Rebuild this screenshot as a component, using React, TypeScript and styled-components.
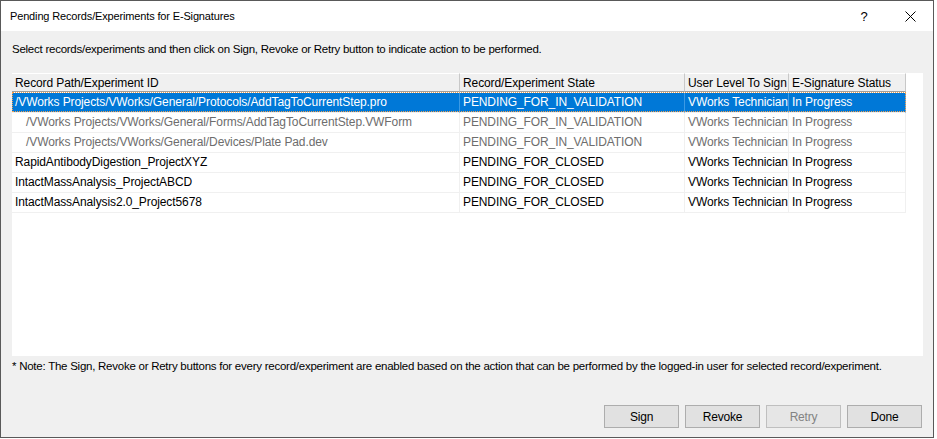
import React from "react";
import styled, { createGlobalStyle } from "styled-components";

type Row = {
    path: string;
    state: string;
    level: string;
    status: string;
    child?: boolean;
    selected?: boolean;
};

const rows: Row[] = [
    {
        path: "/VWorks Projects/VWorks/General/Protocols/AddTagToCurrentStep.pro",
        state: "PENDING_FOR_IN_VALIDATION",
        level: "VWorks Technician",
        status: "In Progress",
        selected: true,
    },
    {
        path: "/VWorks Projects/VWorks/General/Forms/AddTagToCurrentStep.VWForm",
        state: "PENDING_FOR_IN_VALIDATION",
        level: "VWorks Technician",
        status: "In Progress",
        child: true,
    },
    {
        path: "/VWorks Projects/VWorks/General/Devices/Plate Pad.dev",
        state: "PENDING_FOR_IN_VALIDATION",
        level: "VWorks Technician",
        status: "In Progress",
        child: true,
    },
    {
        path: "RapidAntibodyDigestion_ProjectXYZ",
        state: "PENDING_FOR_CLOSED",
        level: "VWorks Technician",
        status: "In Progress",
    },
    {
        path: "IntactMassAnalysis_ProjectABCD",
        state: "PENDING_FOR_CLOSED",
        level: "VWorks Technician",
        status: "In Progress",
    },
    {
        path: "IntactMassAnalysis2.0_Project5678",
        state: "PENDING_FOR_CLOSED",
        level: "VWorks Technician",
        status: "In Progress",
    },
];

const columns = ["Record Path/Experiment ID", "Record/Experiment State", "User Level To Sign", "E-Signature Status"];

const App: React.FC = () => {
    return (
        <>
            <GlobalStyle />
            <Window>
                <TitleBar>
                    <Title>Pending Records/Experiments for E-Signatures</Title>
                    <TitleButton>?</TitleButton>
                    <TitleButton>
                        <svg width="11" height="11" viewBox="0 0 11 11">
                            <path d="M0.5 0.5L10.5 10.5M10.5 0.5L0.5 10.5" stroke="#000" strokeWidth="1" />
                        </svg>
                    </TitleButton>
                </TitleBar>

                <Body>
                    <Instruction>
                        Select records/experiments and then click on Sign, Revoke or Retry button to indicate action to be performed.
                    </Instruction>

                    <ListBox>
                        <Grid>
                            {columns.map((c) => (
                                <HeaderCell key={c}>{c}</HeaderCell>
                            ))}
                            {rows.map((r, i) => (
                                <React.Fragment key={i}>
                                    <Cell $selected={r.selected} $child={r.child} $indent={r.child}>
                                        {r.path}
                                    </Cell>
                                    <Cell $selected={r.selected} $child={r.child}>{r.state}</Cell>
                                    <Cell $selected={r.selected} $child={r.child}>{r.level}</Cell>
                                    <Cell $selected={r.selected} $child={r.child}>{r.status}</Cell>
                                </React.Fragment>
                            ))}
                        </Grid>
                        <FocusRect />
                    </ListBox>

                    <Note>
                        * Note: The Sign, Revoke or Retry buttons for every record/experiment are enabled based on the action that can be performed by the logged-in user for selected record/experiment.
                    </Note>

                    <ButtonRow>
                        <Button>Sign</Button>
                        <Button>Revoke</Button>
                        <Button disabled>Retry</Button>
                        <Button>Done</Button>
                    </ButtonRow>
                </Body>
            </Window>
        </>
    );
};

const GlobalStyle = createGlobalStyle`
  body {
    margin: 0;
    background: #ffffff;
    font-family: "Liberation Sans", Arial, sans-serif;
    font-size: 11.5px;
    letter-spacing: -0.25px;
    -webkit-font-smoothing: antialiased;
  }
`;

const Window = styled.div`
    width: 934px;
    height: 438px;
    box-sizing: border-box;
    border: 1px solid #595959;
    background: #f0f0f0;
    display: flex;
    flex-direction: column;
`;

const TitleBar = styled.div`
    height: 30px;
    flex-shrink: 0;
    background: #ffffff;
    display: flex;
    align-items: center;
    padding-left: 9px;
`;

const Title = styled.div`
    flex: 1;
    color: #000;
    font-size: 11px;
    letter-spacing: -0.15px;
`;

const TitleButton = styled.div`
    width: 46px;
    height: 30px;
    display: flex;
    align-items: center;
    justify-content: center;
    font-size: 13px;
    color: #000;
`;

const Body = styled.div`
    flex: 1;
    display: flex;
    flex-direction: column;
    padding: 0 10px 0 11px;
`;

const Instruction = styled.div`
    margin-top: 10px;
    height: 16px;
    line-height: 16px;
    color: #000;
`;

const ListBox = styled.div`
    position: relative;
    margin-top: 16px;
    height: 283px;
    background: #ffffff;
    overflow: hidden;
    font-size: 12px;
    letter-spacing: -0.1px;
`;

const Grid = styled.div`
    display: grid;
    grid-template-columns: 448px 225px 104px 117px;
    grid-auto-rows: 20px;
`;

const HeaderCell = styled.div`
    box-sizing: border-box;
    height: 19px;
    line-height: 18px;
    padding-left: 3px;
    background: #f0f0f0;
    border-right: 1px solid #c8c8c8;
    border-bottom: 1px solid #a0a0a0;
    border-top: 1px solid #ffffff;
    color: #000;
    white-space: nowrap;
    overflow: hidden;
`;

const Cell = styled.div<{ $selected?: boolean; $child?: boolean; $indent?: boolean }>`
    box-sizing: border-box;
    height: 20px;
    line-height: 19px;
    padding-left: ${(p) => (p.$indent ? "14px" : "3px")};
    border-right: 1px solid ${(p) => (p.$selected ? "#3c9ae4" : "#f0f0f0")};
    border-bottom: 1px solid #f0f0f0;
    background: ${(p) => (p.$selected ? "#0078d7" : "#ffffff")};
    color: ${(p) => (p.$selected ? "#ffffff" : p.$child ? "#6d6d6d" : "#000000")};
    white-space: nowrap;
    overflow: hidden;
`;

const FocusRect = styled.div`
    position: absolute;
    left: 0;
    top: 19px;
    width: 894px;
    height: 20px;
    box-sizing: border-box;
    border: 1px dotted #f3a04c;
    pointer-events: none;
`;

const Note = styled.div`
    margin-top: 2px;
    height: 16px;
    line-height: 16px;
    color: #000;
    white-space: nowrap;
`;

const ButtonRow = styled.div`
    margin-top: 31px;
    display: flex;
    justify-content: flex-end;
    gap: 6px;
    padding-right: 1px;
`;

const Button = styled.button`
    width: 75px;
    height: 23px;
    box-sizing: border-box;
    border: 1px solid #adadad;
    background: #e1e1e1;
    color: #000;
    font-family: inherit;
    font-size: 12px;
    letter-spacing: -0.2px;
    padding: 0;

    &:disabled {
        border-color: #bfbfbf;
        background: #e6e6e6;
        color: #838383;
    }
`;

export default App;
